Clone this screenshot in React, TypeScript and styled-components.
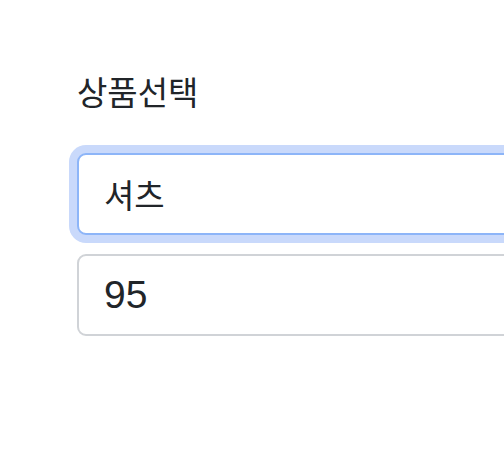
import React from "react";
import styled, { createGlobalStyle } from "styled-components";

const Global = createGlobalStyle`
  html, body { margin: 0; padding: 0; background: #ffffff; overflow: hidden; }
  body { font-family: "Liberation Sans", "Noto Sans CJK KR", sans-serif; color: #212529; }
`;

const Page = styled.div`
  padding: 67px 0 0 77px;
  width: 520px;
`;

const Label = styled.label`
  display: block;
  font-family: "Noto Sans CJK KR", "Liberation Sans", sans-serif;
  font-size: 33px;
  line-height: 48px;
  color: #212529;
  margin-bottom: 38px;
`;

const Stack = styled.div`
  display: flex;
  flex-direction: column;
  gap: 19px;
`;

const Field = styled.input<{ $focused?: boolean; $size: number }>`
  box-sizing: border-box;
  width: 100%;
  height: 82px;
  padding: 0 25px;
  font-family: "Liberation Sans", "Noto Sans CJK KR", sans-serif;
  font-size: ${(p) => p.$size}px;
  color: #212529;
  background: #ffffff;
  border: 2px solid ${(p) => (p.$focused ? "#8db5f8" : "#d0d3d7")};
  border-radius: 9px;
  outline: none;
  box-shadow: ${(p) => (p.$focused ? "0 0 0 8px #c9d9fb" : "none")};
`;

export default function App() {
  return (
    <>
      <Global />
      <Page>
        <Label>상품선택</Label>
        <Stack>
          <Field $focused $size={33} defaultValue="셔츠" readOnly />
          <Field $size={39} defaultValue="95" readOnly />
        </Stack>
      </Page>
    </>
  );
}
